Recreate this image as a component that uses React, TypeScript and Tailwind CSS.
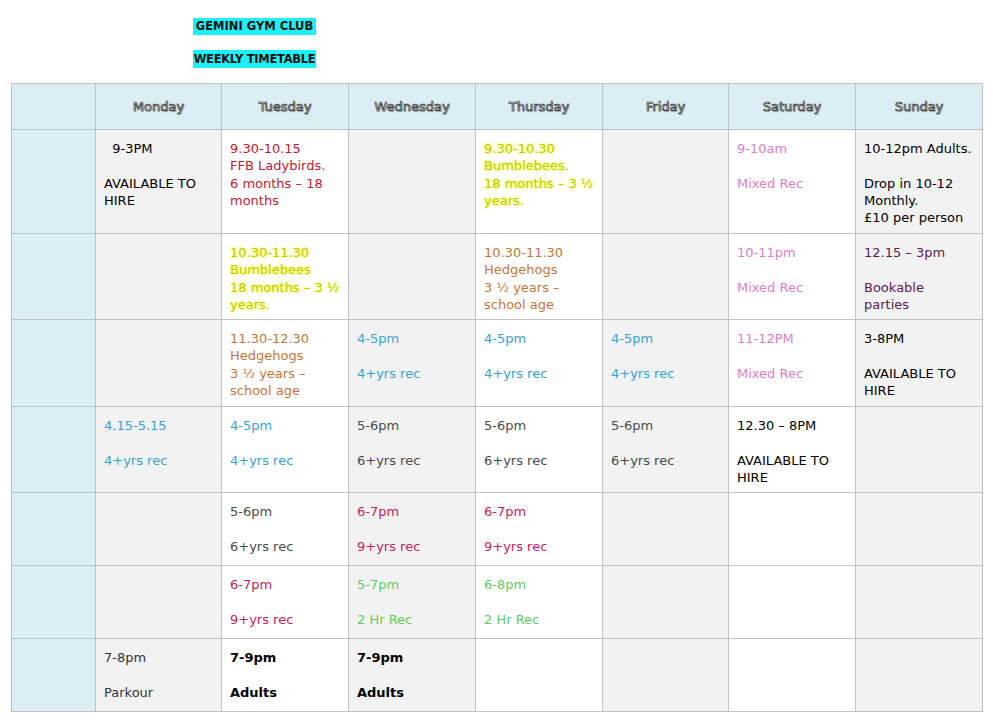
import React from 'react'

type Cell = { lines: string[]; tone?: string }

const tones: Record<string, string> = {
  black: 'text-black',
  red: 'text-[#c3202f]',
  glow: 'text-[#c2cb00] [text-shadow:0_0_2px_#f2ff30,0_0_4px_#f6ff70]',
  orange: 'text-[#c4773b]',
  pink: 'text-[#df80c9]',
  purple: 'text-[#561b58]',
  blue: 'text-[#36a4d4]',
  grey: 'text-[#4a4a4a]',
  crimson: 'text-[#c4225c]',
  green: 'text-[#5fcd5f]',
  dark: 'text-[#333333]',
  bold: 'text-black font-bold',
}

const days = ['Monday', 'Tuesday', 'Wednesday', 'Thursday', 'Friday', 'Saturday', 'Sunday']

const e: Cell = { lines: [] }
const blue45: Cell = { lines: ['4-5pm', '', '4+yrs rec'], tone: 'blue' }
const grey56: Cell = { lines: ['5-6pm', '', '6+yrs rec'], tone: 'grey' }
const crimson67: Cell = { lines: ['6-7pm', '', '9+yrs rec'], tone: 'crimson' }
const adults: Cell = { lines: ['7-9pm', '', 'Adults'], tone: 'bold' }

const rows: Cell[][] = [
  [
    { lines: ['\u00a0\u00a09-3PM', '', 'AVAILABLE TO', 'HIRE'], tone: 'black' },
    { lines: ['9.30-10.15', 'FFB Ladybirds.', '6 months – 18', 'months'], tone: 'red' },
    e,
    { lines: ['9.30-10.30', 'Bumblebees.', '18 months – 3 ½', 'years.'], tone: 'glow' },
    e,
    { lines: ['9-10am', '', 'Mixed Rec'], tone: 'pink' },
    { lines: ['10-12pm Adults.', '', 'Drop in 10-12', 'Monthly.', '£10 per person'], tone: 'black' },
  ],
  [
    e,
    { lines: ['10.30-11.30', 'Bumblebees', '18 months – 3 ½', 'years.'], tone: 'glow' },
    e,
    { lines: ['10.30-11.30', 'Hedgehogs', '3 ½ years –', 'school age'], tone: 'orange' },
    e,
    { lines: ['10-11pm', '', 'Mixed Rec'], tone: 'pink' },
    { lines: ['12.15 – 3pm', '', 'Bookable', 'parties'], tone: 'purple' },
  ],
  [
    e,
    { lines: ['11.30-12.30', 'Hedgehogs', '3 ½ years –', 'school age'], tone: 'orange' },
    blue45,
    blue45,
    blue45,
    { lines: ['11-12PM', '', 'Mixed Rec'], tone: 'pink' },
    { lines: ['3-8PM', '', 'AVAILABLE TO', 'HIRE'], tone: 'black' },
  ],
  [
    { lines: ['4.15-5.15', '', '4+yrs rec'], tone: 'blue' },
    blue45,
    grey56,
    grey56,
    grey56,
    { lines: ['12.30 – 8PM', '', 'AVAILABLE TO', 'HIRE'], tone: 'black' },
    e,
  ],
  [e, grey56, crimson67, crimson67, e, e, e],
  [
    e,
    crimson67,
    { lines: ['5-7pm', '', '2 Hr Rec'], tone: 'green' },
    { lines: ['6-8pm', '', '2 Hr Rec'], tone: 'green' },
    e,
    e,
    e,
  ],
  [{ lines: ['7-8pm', '', 'Parkour'], tone: 'dark' }, adults, adults, e, e, e, e],
]

const App = () => {
  return (
    <div className="min-h-screen bg-white font-['DejaVu_Sans',sans-serif]">
      <div className="ml-[191px] flex w-[127px] flex-col items-center gap-[15px] pt-[18px] text-[11.5px] font-bold whitespace-nowrap text-[#111]">
        <span className="bg-[#1ef0f7] px-[3px] leading-[17px]">GEMINI GYM CLUB</span>
        <span className="bg-[#1ef0f7] px-[1px] leading-[18px] tracking-[-0.3px]">WEEKLY TIMETABLE</span>
      </div>

      <div className="mt-[15px] ml-[11px] grid w-[972px] grid-cols-[84px_126px_127px_127px_127px_126px_127px_127px] grid-rows-[46px_104px_86px_87px_86px_73px_73px_73px] border-t border-l border-[#b9c3c9] text-[13px] leading-[17.3px]">
        <div className="border-r border-b border-[#b9c3c9] bg-[#daeef3]" />
        {days.map((d) => (
          <div
            key={d}
            className="flex items-center justify-center border-r border-b border-[#b9c3c9] bg-[#daeef3] text-white [-webkit-text-stroke:0.7px_#353535] [text-shadow:1px_1px_1px_rgba(0,0,0,0.3)]"
          >
            {d}
          </div>
        ))}

        {rows.map((row, r) => (
          <React.Fragment key={r}>
            <div className="border-r border-b border-[#b9c3c9] bg-[#daeef3]" />
            {row.map((cell, c) => (
              <div
                key={c}
                className={`border-r border-b border-[#c2c2c2] px-[8px] pt-[10px] whitespace-nowrap ${
                  c % 2 === 0 ? 'bg-[#f2f2f2]' : 'bg-white'
                } ${cell.tone ? tones[cell.tone] : ''}`}
              >
                {cell.lines.map((l, i) => (
                  <div key={i} className="h-[17.3px]">
                    {l}
                  </div>
                ))}
              </div>
            ))}
          </React.Fragment>
        ))}
      </div>
    </div>
  )
}

export default App
